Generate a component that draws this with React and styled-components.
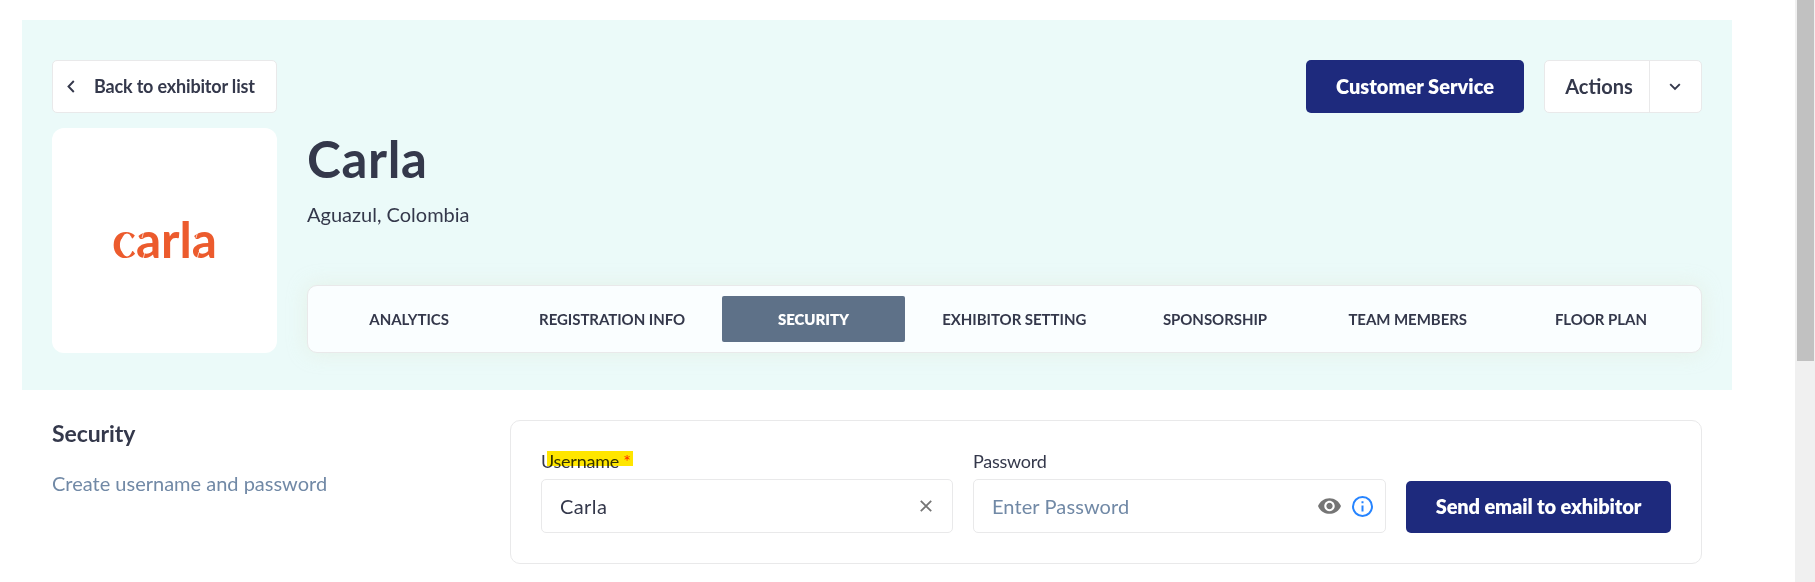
/**
*
* ExhibitorSecurity
*
*/

import React from 'react';
import styled, { createGlobalStyle, css } from 'styled-components';

const theme = {
  fg: '#34384b',
  muted: '#7189a6',
  navy: '#1e2a7d',
  slate: '#5e7188',
  mint: '#ebfaf9',
  border: '#e9e9ea',
  white: '#fff',
};

const tabs = [
  { label: 'ANALYTICS', width: 186 },
  { label: 'REGISTRATION INFO', width: 219.5 },
  { label: 'SECURITY', width: 183, active: true },
  { label: 'EXHIBITOR SETTING', width: 218 },
  { label: 'SPONSORSHIP', width: 183 },
  { label: 'TEAM MEMBERS', width: 202 },
  { label: 'FLOOR PLAN', width: 184 },
];

const GlobalStyle = createGlobalStyle`
  * {
    box-sizing: border-box;
  }
  body {
    margin: 0;
    overflow: hidden;
    background: ${theme.white};
    color: ${theme.fg};
    font-family: Lato, sans-serif;
  }
  button, input {
    font: inherit;
    color: inherit;
  }
`;

const Page = styled.div`
  display: flex;
  justify-content: space-between;
  height: 582px;
`;

const Content = styled.main`
  width: 1710px;
  margin: 20px 0 0 22px;
`;

const Scrollbar = styled.div`
  width: 20px;
  padding: 0 1px 0 2px;
  background: #f0f0f0;
`;

const Thumb = styled.div`
  height: 361px;
  background: #c1c1c1;
`;

const Banner = styled.header`
  height: 370px;
  padding: 40px 30px 0;
  background: ${theme.mint};
`;

const TopRow = styled.div`
  display: flex;
  justify-content: space-between;
  height: 53px;
`;

const ButtonGroup = styled.div`
  display: flex;
  gap: 20px;
`;

const outline = css`
  background: ${theme.white};
  border: 1px solid ${theme.border};
  border-radius: 5px;
`;

const BackButton = styled.button`
  ${outline}
  display: flex;
  align-items: center;
  gap: 15px;
  width: 225px;
  padding: 0 0 2px 12px;
  font-size: 18px;
  font-weight: 700;
  letter-spacing: -0.17px;
  white-space: nowrap;
`;

const PrimaryButton = styled.button`
  width: ${props => props.$width}px;
  height: ${props => props.$height}px;
  padding: 0 0 2px;
  border: 0;
  border-radius: 5px;
  background: ${theme.navy};
  color: ${theme.white};
  font-size: 20px;
  font-weight: 800;
  letter-spacing: ${props => props.$spacing || 0}px;
  white-space: nowrap;
`;

const SplitButton = styled.div`
  ${outline}
  display: flex;
  width: 158px;
`;

const SplitLabel = styled.button`
  width: 105px;
  padding: 0 0 2px 4px;
  border: 0;
  border-right: 1px solid ${theme.border};
  background: none;
  font-size: 20px;
  font-weight: 700;
`;

const SplitToggle = styled.button`
  display: flex;
  flex: 1;
  align-items: center;
  justify-content: center;
  padding: 0 2px 0 0;
  border: 0;
  background: none;
`;

const Profile = styled.div`
  display: flex;
  gap: 30px;
  margin-top: 15px;
`;

const LogoCard = styled.div`
  width: 225px;
  height: 225px;
  border-radius: 12px;
  background: ${theme.white};
`;

const Details = styled.div`
  display: flex;
  flex: 1;
  flex-direction: column;
`;

const Name = styled.h1`
  margin: 0;
  font-size: 51px;
  font-weight: 700;
  line-height: 61px;
  letter-spacing: 0.7px;
`;

const Place = styled.p`
  margin: 13px 0 0;
  font-size: 20px;
  line-height: 24px;
`;

const Tabs = styled.nav`
  display: flex;
  height: 68px;
  margin-top: auto;
  padding: 10px 8px;
  border: 1px solid ${theme.border};
  border-radius: 10px;
  background: #fafeff;
  box-shadow: 0 0 20px rgba(226, 238, 224, 0.7);
`;

const Tab = styled.button`
  flex: ${props => props.$width} 1 0;
  padding: 0;
  border: 0;
  border-radius: 2px;
  background: ${props => (props.$active ? theme.slate : 'none')};
  color: ${props => (props.$active ? theme.white : theme.fg)};
  font-size: 15px;
  font-weight: ${props => (props.$active ? 800 : 700)};
  letter-spacing: -0.05px;
  white-space: nowrap;
`;

const Section = styled.section`
  display: flex;
  justify-content: space-between;
  padding: 30px 30px 0;
`;

const SectionTitle = styled.h2`
  margin: -1px 0 0;
  font-size: 23px;
  font-weight: 700;
  line-height: 28px;
  letter-spacing: -0.1px;
`;

const SectionText = styled.p`
  margin: 24px 0 0;
  color: ${theme.muted};
  font-size: 20px;
  line-height: 24px;
`;

const FormCard = styled.form`
  display: flex;
  gap: 20px;
  width: 1192px;
  height: 144px;
  padding: 30px 30px 0;
  border: 1px solid ${theme.border};
  border-radius: 10px;
`;

const Field = styled.div`
  display: flex;
  width: ${props => props.$width}px;
  flex-direction: column;
`;

const Label = styled.label`
  position: relative;
  align-self: flex-start;
  margin-top: -1px;
  font-size: 18px;
  line-height: 22px;
  letter-spacing: -0.25px;
`;

const Marker = styled.span`
  position: absolute;
  top: 1px;
  left: 6px;
  width: 86px;
  height: 15px;
  background: #ffe600;
  mix-blend-mode: multiply;
`;

const Required = styled.span`
  color: #ff2a1a;
`;

const InputBox = styled.div`
  ${outline}
  display: flex;
  align-items: center;
  gap: 11px;
  height: 54px;
  margin-top: 7px;
  padding: 0 ${props => props.$end}px 0 18px;
`;

const Input = styled.input`
  flex: 1;
  min-width: 0;
  padding: 0;
  border: 0;
  outline: 0;
  background: none;
  font-size: 20px;
  letter-spacing: ${props => (props.type === 'password' ? 0.1 : 0.4)}px;

  &::placeholder {
    color: ${theme.muted};
    opacity: 1;
  }
`;

const Submit = styled.div`
  margin-left: auto;
  padding-top: 30px;
`;

function Chevron(props) {
  return (
    <svg width="14" height="14" viewBox="0 0 14 14" fill="none" stroke={theme.fg} strokeWidth="1.9">
      <path d={props.left ? 'M8.8 2 3.5 7.5 8.8 13' : 'M2.2 4.2 7 9 11.8 4.2'} />
    </svg>
  );
}

// wordmark, the round letters thinned out to hairlines
function CarlaLogo() {
  return (
    <svg width="225" height="225" viewBox="0 0 225 225">
      <text
        x="60"
        y="130"
        textLength="105"
        lengthAdjust="spacingAndGlyphs"
        fill="#ec5b2d"
        fontFamily="Lato, sans-serif"
        fontSize="50"
        fontWeight="700"
      >
        carla
      </text>
      <ellipse cx="75" cy="117" rx="6.2" ry="11.4" fill={theme.white} />
      <path
        d="M92 102.5 90 110M93 124 91 131M146 102.5 144 110M147 124 145 131"
        stroke={theme.white}
        strokeWidth="1"
        strokeOpacity="0.7"
      />
    </svg>
  );
}

function ClearIcon() {
  return (
    <svg width="12" height="12" viewBox="0 0 12 12" stroke="#757575" strokeWidth="1.8">
      <path d="M.8.8 11.2 11.2M11.2.8.8 11.2" />
    </svg>
  );
}

function EyeIcon() {
  return (
    <svg width="23" height="16" viewBox="1 4.5 22 15" fill="#757575">
      <path d="M12 4.5C7 4.5 2.73 7.61 1 12c1.73 4.39 6 7.5 11 7.5s9.27-3.11 11-7.5c-1.73-4.39-6-7.5-11-7.5zM12 17c-2.76 0-5-2.24-5-5s2.24-5 5-5 5 2.24 5 5-2.24 5-5 5zm0-8c-1.66 0-3 1.34-3 3s1.34 3 3 3 3-1.34 3-3-1.34-3-3-3z" />
    </svg>
  );
}

function InfoIcon() {
  return (
    <svg width="21" height="21" viewBox="0 0 21 21" fill="none" stroke="#2684ff" strokeWidth="2">
      <circle cx="10.5" cy="10.5" r="9.5" />
      <path d="M10.5 9.5v6M10.5 5.3v2" />
    </svg>
  );
}

function App() {
  return (
    <Page>
      <GlobalStyle />
      <Content>
        <Banner>
          <TopRow>
            <BackButton>
              <Chevron left />
              Back to exhibitor list
            </BackButton>
            <ButtonGroup>
              <PrimaryButton $width={218} $height={53}>Customer Service</PrimaryButton>
              <SplitButton>
                <SplitLabel>Actions</SplitLabel>
                <SplitToggle><Chevron /></SplitToggle>
              </SplitButton>
            </ButtonGroup>
          </TopRow>
          <Profile>
            <LogoCard><CarlaLogo /></LogoCard>
            <Details>
              <Name>Carla</Name>
              <Place>Aguazul, Colombia</Place>
              <Tabs>
                {tabs.map(tab => (
                  <Tab key={tab.label} $width={tab.width} $active={tab.active}>{tab.label}</Tab>
                ))}
              </Tabs>
            </Details>
          </Profile>
        </Banner>
        <Section>
          <div>
            <SectionTitle>Security</SectionTitle>
            <SectionText>Create username and password</SectionText>
          </div>
          <FormCard>
            <Field $width={412}>
              <Label>
                Username <Required>*</Required>
                <Marker />
              </Label>
              <InputBox $end={20}>
                <Input defaultValue="Carla" />
                <ClearIcon />
              </InputBox>
            </Field>
            <Field $width={413}>
              <Label>Password</Label>
              <InputBox $end={12}>
                <Input type="password" placeholder="Enter Password" />
                <EyeIcon />
                <InfoIcon />
              </InputBox>
            </Field>
            <Submit>
              <PrimaryButton type="button" $width={265} $height={52} $spacing={-0.12}>Send email to exhibitor</PrimaryButton>
            </Submit>
          </FormCard>
        </Section>
      </Content>
      <Scrollbar><Thumb /></Scrollbar>
    </Page>
  );
}

export default App;
